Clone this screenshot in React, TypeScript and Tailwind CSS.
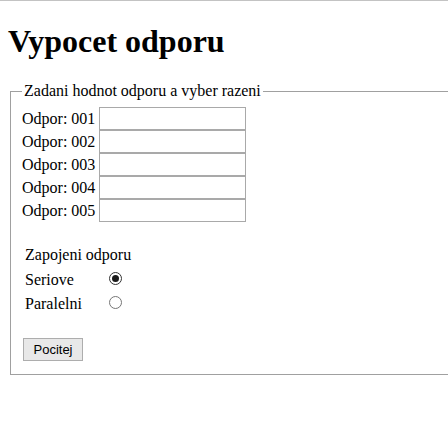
import React from "react";

const rows = ["001", "002", "003", "004", "005"];

function Radio({ checked }: { checked?: boolean }) {
  return (
    <span
      className={
        "mt-[1px] flex h-[13px] w-[13px] items-center justify-center rounded-full border bg-white " +
        (checked ? "border-[#333333]" : "border-[#767676]")
      }
    >
      {checked ? <span className="h-[7px] w-[7px] rounded-full bg-[#1a1a1a]" /> : null}
    </span>
  );
}

export default function App() {
  return (
    <div className="h-[442px] w-[448px] overflow-hidden border-t border-[#c3c3c3] bg-white font-['Liberation_Serif',serif] text-black">
      <h1 className="ml-2 mt-[22px] text-[32px] font-bold leading-[36px]">Vypocet odporu</h1>
      <fieldset className="ml-[10px] mt-[23px] border border-r-0 border-[#a0a0a0] pb-[13px] pl-[11px] pt-[7px]">
        <legend className="px-[2px] text-[16px] leading-[18px]">Zadani hodnot odporu a vyber razeni</legend>
        <div className="flex flex-col">
          {rows.map((r) => (
            <div key={r} className="flex h-[23px] items-start text-[16px] leading-[23px]">
              <span className="w-[77px] whitespace-nowrap">Odpor: {r}</span>
              <input
                type="text"
                className="h-[23px] w-[147px] border border-[#a9a9a9] bg-white px-1 outline-none"
              />
            </div>
          ))}
        </div>
        <div className="ml-[3px] mt-[24px] flex flex-col text-[16px] leading-[18px]">
          <div>Zapojeni odporu</div>
          <div className="mt-[7px] flex items-start">
            <span className="w-[84px]">Seriove</span>
            <Radio checked />
          </div>
          <div className="mt-[6px] flex items-start">
            <span className="w-[84px]">Paralelni</span>
            <Radio />
          </div>
        </div>
        <button
          type="button"
          className="ml-[1px] mt-[25px] flex h-[23px] w-[60px] items-center justify-center border border-[#adadad] bg-[#e8e8e8] font-['Liberation_Sans',sans-serif] text-[13px] text-black"
        >
          Pocitej
        </button>
      </fieldset>
    </div>
  );
}
